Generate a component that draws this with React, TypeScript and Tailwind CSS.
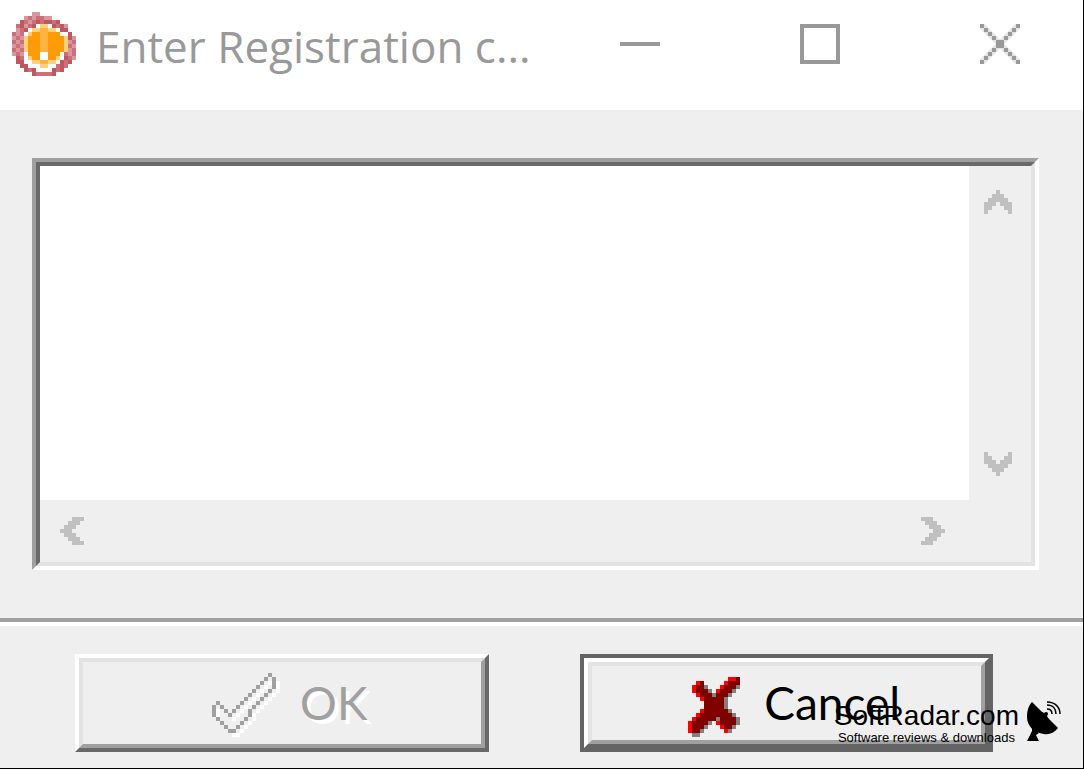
import React from "react";

type Palette = Record<string, string>;

const flameRows = [
  ".....pp.........",
  "...pqpqqpp......",
  "..rqpqrqrrqr....",
  ".qrpqrwyywrqrp..",
  ".pqrwyyllyywrr..",
  "qpqwyoollooowwr.",
  "pqpyooollooooyrp",
  "qpqyooollooooypq",
  "pqpyooollooooyqp",
  "qpqyooollooooypq",
  "pqpwooowwooowqpq",
  ".rqwyoowwooywrqp",
  ".rrwwyyllyywrqr.",
  "..rrwwwyywwqrq..",
  "...rqrwwwwrqr...",
  ".....rqqqqr.....",
];

const flameColors: Palette = {
  r: "#c0565e",
  q: "#cb7078",
  p: "#d9969d",
  w: "#ffffff",
  y: "#ffd17f",
  o: "#ff9c05",
  l: "#ffb340",
};

const closeRows = [
  "#........#",
  ".#......#.",
  "..#....#..",
  "...#..#...",
  "....##....",
  "....##....",
  "...#..#...",
  "..#....#..",
  ".#......#.",
  "#........#",
];

const checkRows = [
  "..............#.",
  ".............#.#",
  "............#..#",
  "...........#...#",
  "..........#...#.",
  ".........#...#..",
  "........#...#...",
  ".#.....#...#....",
  "#.#...#...#.....",
  "#..#.#...#......",
  "#...#....#......",
  ".#......#.......",
  "..#....#........",
  "...#..#.........",
  "....##..........",
];

const crossRows = [
  "..........rrd",
  "..rd.....rddd",
  ".rddg...rdddg",
  ".rdddg.rdddg.",
  "..rdddgdddg..",
  "...rdddddg...",
  "....dddddg...",
  "....dddddg...",
  "...rddddddg..",
  "..rddddddddg.",
  ".rdddddgddddg",
  "rddddg.rddddg",
  "rdddg...rddg.",
  "rddg.....rg..",
  ".gg..........",
];

const crossColors: Palette = { r: "#ff0000", d: "#800000", g: "#808080" };

const chevrons = {
  up: ["...#...", "..###..", ".#####.", "###.###", "##...##", "#.....#"],
  down: ["#.....#", "##...##", "###.###", ".#####.", "..###..", "...#..."],
  left: ["...###", "..###.", ".###..", "###...", ".###..", "..###.", "...###"],
  right: ["###...", ".###..", "..###.", "...###", "..###.", ".###..", "###..."],
};

function Cells({ rows, colors, shift = 0 }: { rows: string[]; colors: Palette; shift?: number }) {
  return (
    <>
      {rows.flatMap((row, y) =>
        row.split("").map((cell, x) =>
          colors[cell] ? (
            <rect key={`${x}-${y}`} x={x + shift} y={y + shift} width="1" height="1" fill={colors[cell]} />
          ) : null
        )
      )}
    </>
  );
}

function PixelIcon({ rows, colors, className = "" }: { rows: string[]; colors: Palette; className?: string }) {
  const width = rows[0].length;
  return (
    <svg
      aria-hidden="true"
      width={width * 4}
      height={rows.length * 4}
      viewBox={`0 0 ${width} ${rows.length}`}
      shapeRendering="crispEdges"
      className={`shrink-0 ${className}`}
    >
      <Cells rows={rows} colors={colors} />
    </svg>
  );
}

function ScrollButton({ direction }: { direction: keyof typeof chevrons }) {
  return (
    <button type="button" aria-label={`Scroll ${direction}`} disabled>
      <PixelIcon rows={chevrons[direction]} colors={{ "#": "#c0c0c0" }} />
    </button>
  );
}

function SatelliteDish() {
  return (
    <svg aria-hidden="true" width="34" height="41" viewBox="0 0 34 41" className="shrink-0">
      <path d="M5 1 31 27C27 32 22 34 17 33C7 32 0 25 0 16C0 9 2 4 5 1Z" />
      <path d="M5 27 12 32 9 34 12 40H0L5 30Z" />
      <path d="M13 10 19 13 22 19Z" />
      <circle cx="19" cy="13" r="2" />
      <path
        d="M20 8C23 8 25 10 25 13M20 4C26 4 29 8 29 13M20 1C28 1 33 6 33 13"
        fill="none"
        stroke="#000"
        strokeWidth="1.5"
      />
    </svg>
  );
}

export default function App() {
  return (
    <div className="relative flex min-h-screen flex-col border-r border-b border-black bg-[#efefef] font-['Liberation_Sans',sans-serif] text-black">
      <header className="flex h-[110px] items-start justify-between bg-white pt-3 pr-[63px] pl-3">
        <div className="flex items-start gap-5">
          <PixelIcon rows={flameRows} colors={flameColors} />
          <h1 className="font-['Open_Sans',sans-serif] text-[44px] leading-[68px] whitespace-nowrap text-[#999999]">
            Enter Registration c...
          </h1>
        </div>
        <div className="flex h-16 items-center gap-[140px]">
          <button type="button" aria-label="Minimize" className="flex h-10 w-10 items-center">
            <span className="h-1 w-full bg-[#999999]" />
          </button>
          <button type="button" aria-label="Maximize" className="h-10 w-10 border-4 border-[#999999]" />
          <button type="button" aria-label="Close" className="h-10 w-10">
            <svg aria-hidden="true" width="40" height="40" viewBox="0 0 10 10">
              <path d="M.5 .5 9.5 9.5M9.5 .5 .5 9.5" stroke="#e6e6e6" strokeWidth="1.6" />
              <g shapeRendering="crispEdges">
                <Cells rows={closeRows} colors={{ "#": "#999999" }} />
              </g>
            </svg>
          </button>
        </div>
      </header>

      <main className="flex flex-1 pt-12 pr-11 pb-12 pl-8">
        <div className="flex flex-1 border-4 border-t-[#9f9f9f] border-r-white border-b-white border-l-[#9f9f9f]">
          <div className="grid flex-1 grid-cols-[1fr_62px] grid-rows-[1fr_62px] border-4 border-t-[#696969] border-r-[#e3e3e3] border-b-[#e3e3e3] border-l-[#696969]">
            <textarea
              aria-label="Registration code"
              className="h-full w-full resize-none bg-white p-2 text-[48px] outline-none"
            />
            <div className="flex flex-col items-center justify-between pt-6 pr-1 pb-6">
              <ScrollButton direction="up" />
              <ScrollButton direction="down" />
            </div>
            <div className="flex items-center justify-between px-5 pr-6">
              <ScrollButton direction="left" />
              <ScrollButton direction="right" />
            </div>
          </div>
        </div>
      </main>

      <hr className="h-2 border-t-4 border-b-4 border-t-[#9f9f9f] border-b-white" />

      <footer className="flex gap-[91px] pt-7 pr-[90px] pb-4 pl-[75px] font-['Lato',sans-serif] text-[46px] leading-[56px]">
        <button
          type="button"
          disabled
          className="flex h-[98px] flex-1 border-4 border-t-white border-r-[#696969] border-b-[#696969] border-l-white"
        >
          <span className="flex h-full w-full items-center justify-center gap-5 border-4 border-t-[#e3e3e3] border-r-[#a0a0a0] border-b-[#a0a0a0] border-l-[#e3e3e3] pl-4 text-[#a0a0a0] [text-shadow:4px_4px_0_#fff]">
            <svg
              aria-hidden="true"
              width="68"
              height="64"
              viewBox="0 0 17 16"
              shapeRendering="crispEdges"
              className="mt-1 shrink-0"
            >
              <Cells rows={checkRows} colors={{ "#": "#ffffff" }} shift={1} />
              <Cells rows={checkRows} colors={{ "#": "#a0a0a0" }} />
            </svg>
            OK
          </span>
        </button>
        <button type="button" className="flex h-[98px] flex-1 border-4 border-[#646464]">
          <span className="flex h-full w-full border-4 border-t-white border-r-[#646464] border-b-[#646464] border-l-white">
            <span className="flex h-full w-full items-center justify-center gap-6 border-4 border-t-[#e3e3e3] border-r-[#a0a0a0] border-b-[#a0a0a0] border-l-[#e3e3e3] pl-4">
              <PixelIcon rows={crossRows} colors={crossColors} className="mt-2" />
              Cancel
            </span>
          </span>
        </button>
      </footer>

      <div className="pointer-events-none absolute right-[22px] bottom-[22px] flex items-end gap-2">
        <div className="text-center">
          <p className="text-[28px] leading-7">SoftRadar.com</p>
          <p className="text-[13px] leading-4">Software reviews &amp; downloads</p>
        </div>
        <div className="pb-1">
          <SatelliteDish />
        </div>
      </div>
    </div>
  );
}
